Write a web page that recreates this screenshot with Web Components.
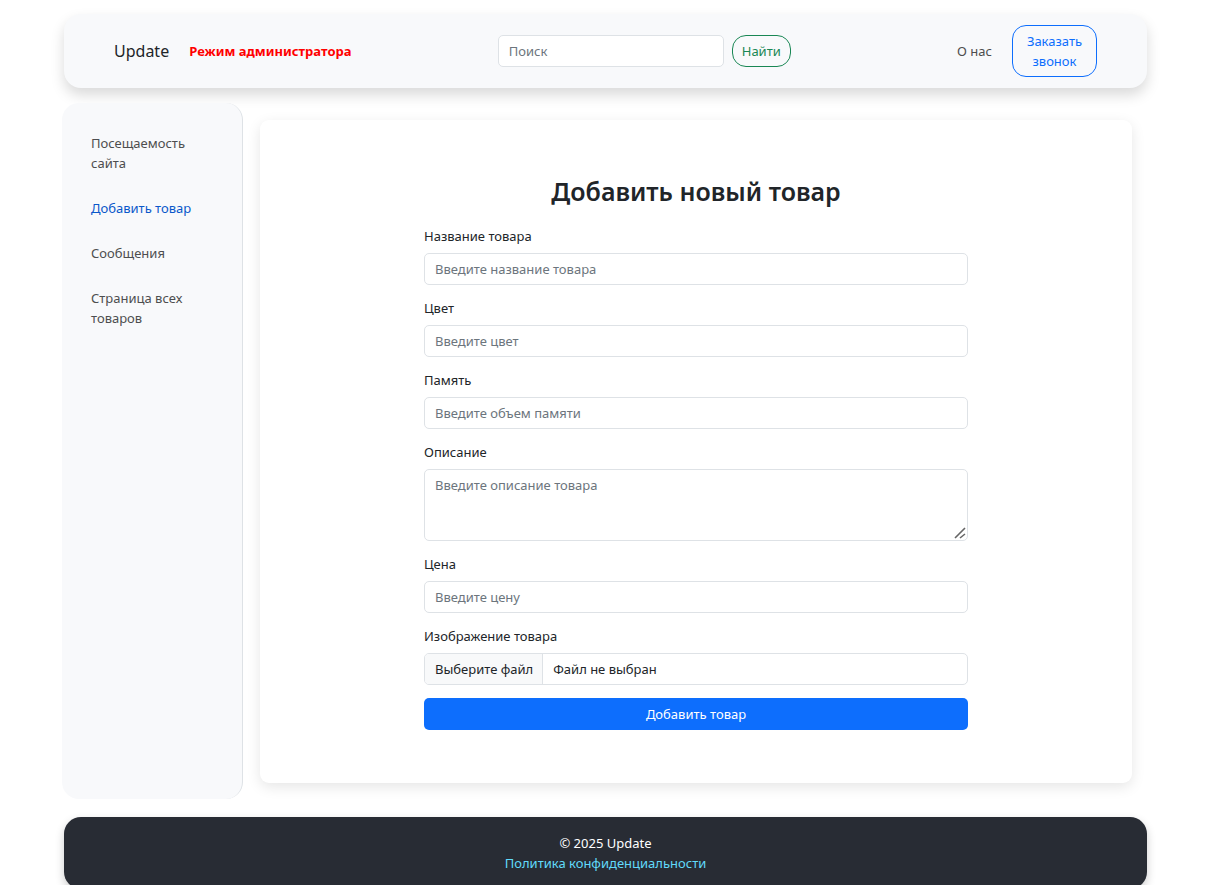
<!DOCTYPE html>
<html lang="ru">
<head>
<meta charset="utf-8">
<title>Update — Добавить товар</title>
<style>
  html { scrollbar-width: none; }
  body {
    margin: 0;
    background: #fff;
    color: #212529;
    font: 13px/20px "Noto Sans", "Open Sans", sans-serif;
  }
</style>
</head>
<body>
<admin-page>
  <site-header slot="header" brand="Update" mode="Режим администратора"></site-header>
  <side-menu slot="menu">
    <side-link>Посещаемость сайта</side-link>
    <side-link active>Добавить товар</side-link>
    <side-link>Сообщения</side-link>
    <side-link>Страница всех товаров</side-link>
  </side-menu>
  <product-form></product-form>
  <site-footer slot="footer"></site-footer>
</admin-page>

<script>
  const define = (name, html, setup) => {
    const template = document.createElement('template');
    template.innerHTML = '<style>*{box-sizing:border-box}</style>' + html;
    customElements.define(name, class extends HTMLElement {
      constructor() {
        super();
        this.attachShadow({ mode: 'open' }).append(template.content.cloneNode(true));
      }
      connectedCallback() {
        if (setup) setup(this, this.shadowRoot);
      }
    });
  };

  define('admin-page', `
    <style>
      :host { display: block; padding: 14px 61px 0 64px; }
      .body { display: flex; margin: 15px 0 18px -2px; }
      main { flex: 1; min-width: 0; padding: 17px 15px 16px 17px; }
    </style>
    <slot name="header"></slot>
    <div class="body">
      <slot name="menu"></slot>
      <main><slot></slot></main>
    </div>
    <slot name="footer"></slot>
  `);

  define('site-header', `
    <style>
      :host { display: block; }
      header {
        display: flex; align-items: center; justify-content: space-between;
        padding: 11px 50px; border-radius: 17px; background: #f8f9fb;
        box-shadow: 0 7px 14px rgba(0,0,0,.15);
      }
      .brand, form, nav { display: flex; align-items: center; }
      .brand { gap: 20px; }
      .brand a { color: #212529; font-size: 16px; line-height: 24px; text-decoration: none; }
      strong { color: #f00; font-weight: 700; }
      form { gap: 8px; }
      input {
        width: 226px; height: 32px; padding: 0 10px; font: inherit; color: inherit;
        border: 1px solid #dee2e6; border-radius: 5px; background: #fff;
      }
      input::placeholder { color: #6c757d; opacity: 1; }
      button { font: inherit; background: transparent; border: 1px solid; border-radius: 14px; }
      .find { height: 32px; padding: 0 9px; color: #198754; }
      nav { gap: 20px; padding-left: 20px; }
      nav a { color: #4d4e4f; text-decoration: none; }
      .call { width: 85px; padding: 5px 10px; color: #0d6efd; }
    </style>
    <header>
      <div class="brand"><a href="#"></a><strong></strong></div>
      <form role="search">
        <input type="search" placeholder="Поиск" aria-label="Поиск">
        <button class="find" type="submit">Найти</button>
      </form>
      <nav><a href="#about">О нас</a><button class="call" type="button">Заказать звонок</button></nav>
    </header>
  `, (host, root) => {
    root.querySelector('.brand a').textContent = host.getAttribute('brand');
    root.querySelector('strong').textContent = host.getAttribute('mode');
  });

  define('side-menu', `
    <style>
      :host { display: block; flex: 0 0 181px; }
      nav {
        display: flex; flex-direction: column; gap: 25px; height: 100%;
        padding: 30px 28px 30px 29px; border-right: 1px solid #dee2e6;
        border-radius: 17px; background: #f8f9fb; box-sizing: border-box;
      }
    </style>
    <nav aria-label="Меню администратора"><slot></slot></nav>
  `);

  define('side-link', `
    <style>
      :host { display: block; }
      a { display: block; color: #4d4e4f; text-decoration: none; }
      :host([active]) a { color: #0a58ca; }
    </style>
    <a href="#"><slot></slot></a>
  `);

  define('form-field', `
    <style>
      :host { display: block; margin-bottom: 13px; }
      label { display: block; margin-bottom: 7px; }
      .control {
        display: block; width: 100%; height: 32px; padding: 5px 10px; margin: 0;
        font: inherit; color: inherit; background: #fff;
        border: 1px solid #dee2e6; border-radius: 5px;
      }
      textarea.control { height: 72px; resize: vertical; }
      textarea::-webkit-resizer {
        background: url("data:image/svg+xml,%3Csvg xmlns='http://www.w3.org/2000/svg' width='15' height='15'%3E%3Cpath d='M3 13L13 3M8 13l5-4' stroke='%23666' stroke-width='1.6'/%3E%3C/svg%3E") no-repeat;
      }
      .control::placeholder { color: #6c757d; opacity: 1; }
      .file { position: relative; display: flex; padding: 0; overflow: hidden; }
      .file span { padding: 5px 10px; }
      .file .pick { padding: 5px 9px 5px 10px; background: #f8f9fa; border-right: 1px solid #dee2e6; }
      .file input { position: absolute; inset: 0; width: 100%; opacity: 0; cursor: pointer; }
    </style>
    <label for="field"></label>
  `, (host, root) => {
    if (root.querySelector('.control')) return;
    const label = root.querySelector('label');
    label.textContent = host.getAttribute('label');
    const kind = host.getAttribute('kind');
    if (kind === 'file') {
      const box = document.createElement('div');
      box.className = 'control file';
      box.innerHTML = '<span class="pick">Выберите файл</span><span class="name">Файл не выбран</span><input id="field" type="file" accept="image/*">';
      const input = box.querySelector('input');
      input.addEventListener('change', () => {
        box.querySelector('.name').textContent = input.files[0] ? input.files[0].name : 'Файл не выбран';
      });
      root.append(box);
      return;
    }
    const control = document.createElement(kind === 'textarea' ? 'textarea' : 'input');
    control.id = 'field';
    control.className = 'control';
    control.placeholder = host.getAttribute('hint');
    root.append(control);
  });

  define('product-form', `
    <style>
      :host {
        display: block; padding: 53px; border-radius: 9px; background: #fff;
        box-shadow: 0 4px 14px rgba(0,0,0,.1); box-sizing: border-box;
      }
      h2 { margin: 0 0 17px; font-size: 25px; line-height: 36px; font-weight: 600; text-align: center; }
      form { max-width: 544px; margin: 0 auto; }
      button {
        display: block; width: 100%; height: 32px; padding: 0; font: inherit; color: #fff;
        background: #0d6efd; border: 0; border-radius: 5px;
      }
    </style>
    <h2>Добавить новый товар</h2>
    <form>
      <form-field label="Название товара" hint="Введите название товара"></form-field>
      <form-field label="Цвет" hint="Введите цвет"></form-field>
      <form-field label="Память" hint="Введите объем памяти"></form-field>
      <form-field label="Описание" hint="Введите описание товара" kind="textarea"></form-field>
      <form-field label="Цена" hint="Введите цену"></form-field>
      <form-field label="Изображение товара" kind="file"></form-field>
      <button type="submit">Добавить товар</button>
    </form>
  `);

  define('site-footer', `
    <style>
      :host { display: block; }
      footer {
        padding: 16px; border-radius: 17px; background: #282c34; color: #fff;
        text-align: center; box-shadow: 0 4px 10px rgba(0,0,0,.2);
      }
      p { margin: 0; }
      a { color: #61dafb; text-decoration: none; }
    </style>
    <footer>
      <p>© 2025 Update</p>
      <a href="#privacy">Политика конфиденциальности</a>
    </footer>
  `);
</script>
</body>
</html>
